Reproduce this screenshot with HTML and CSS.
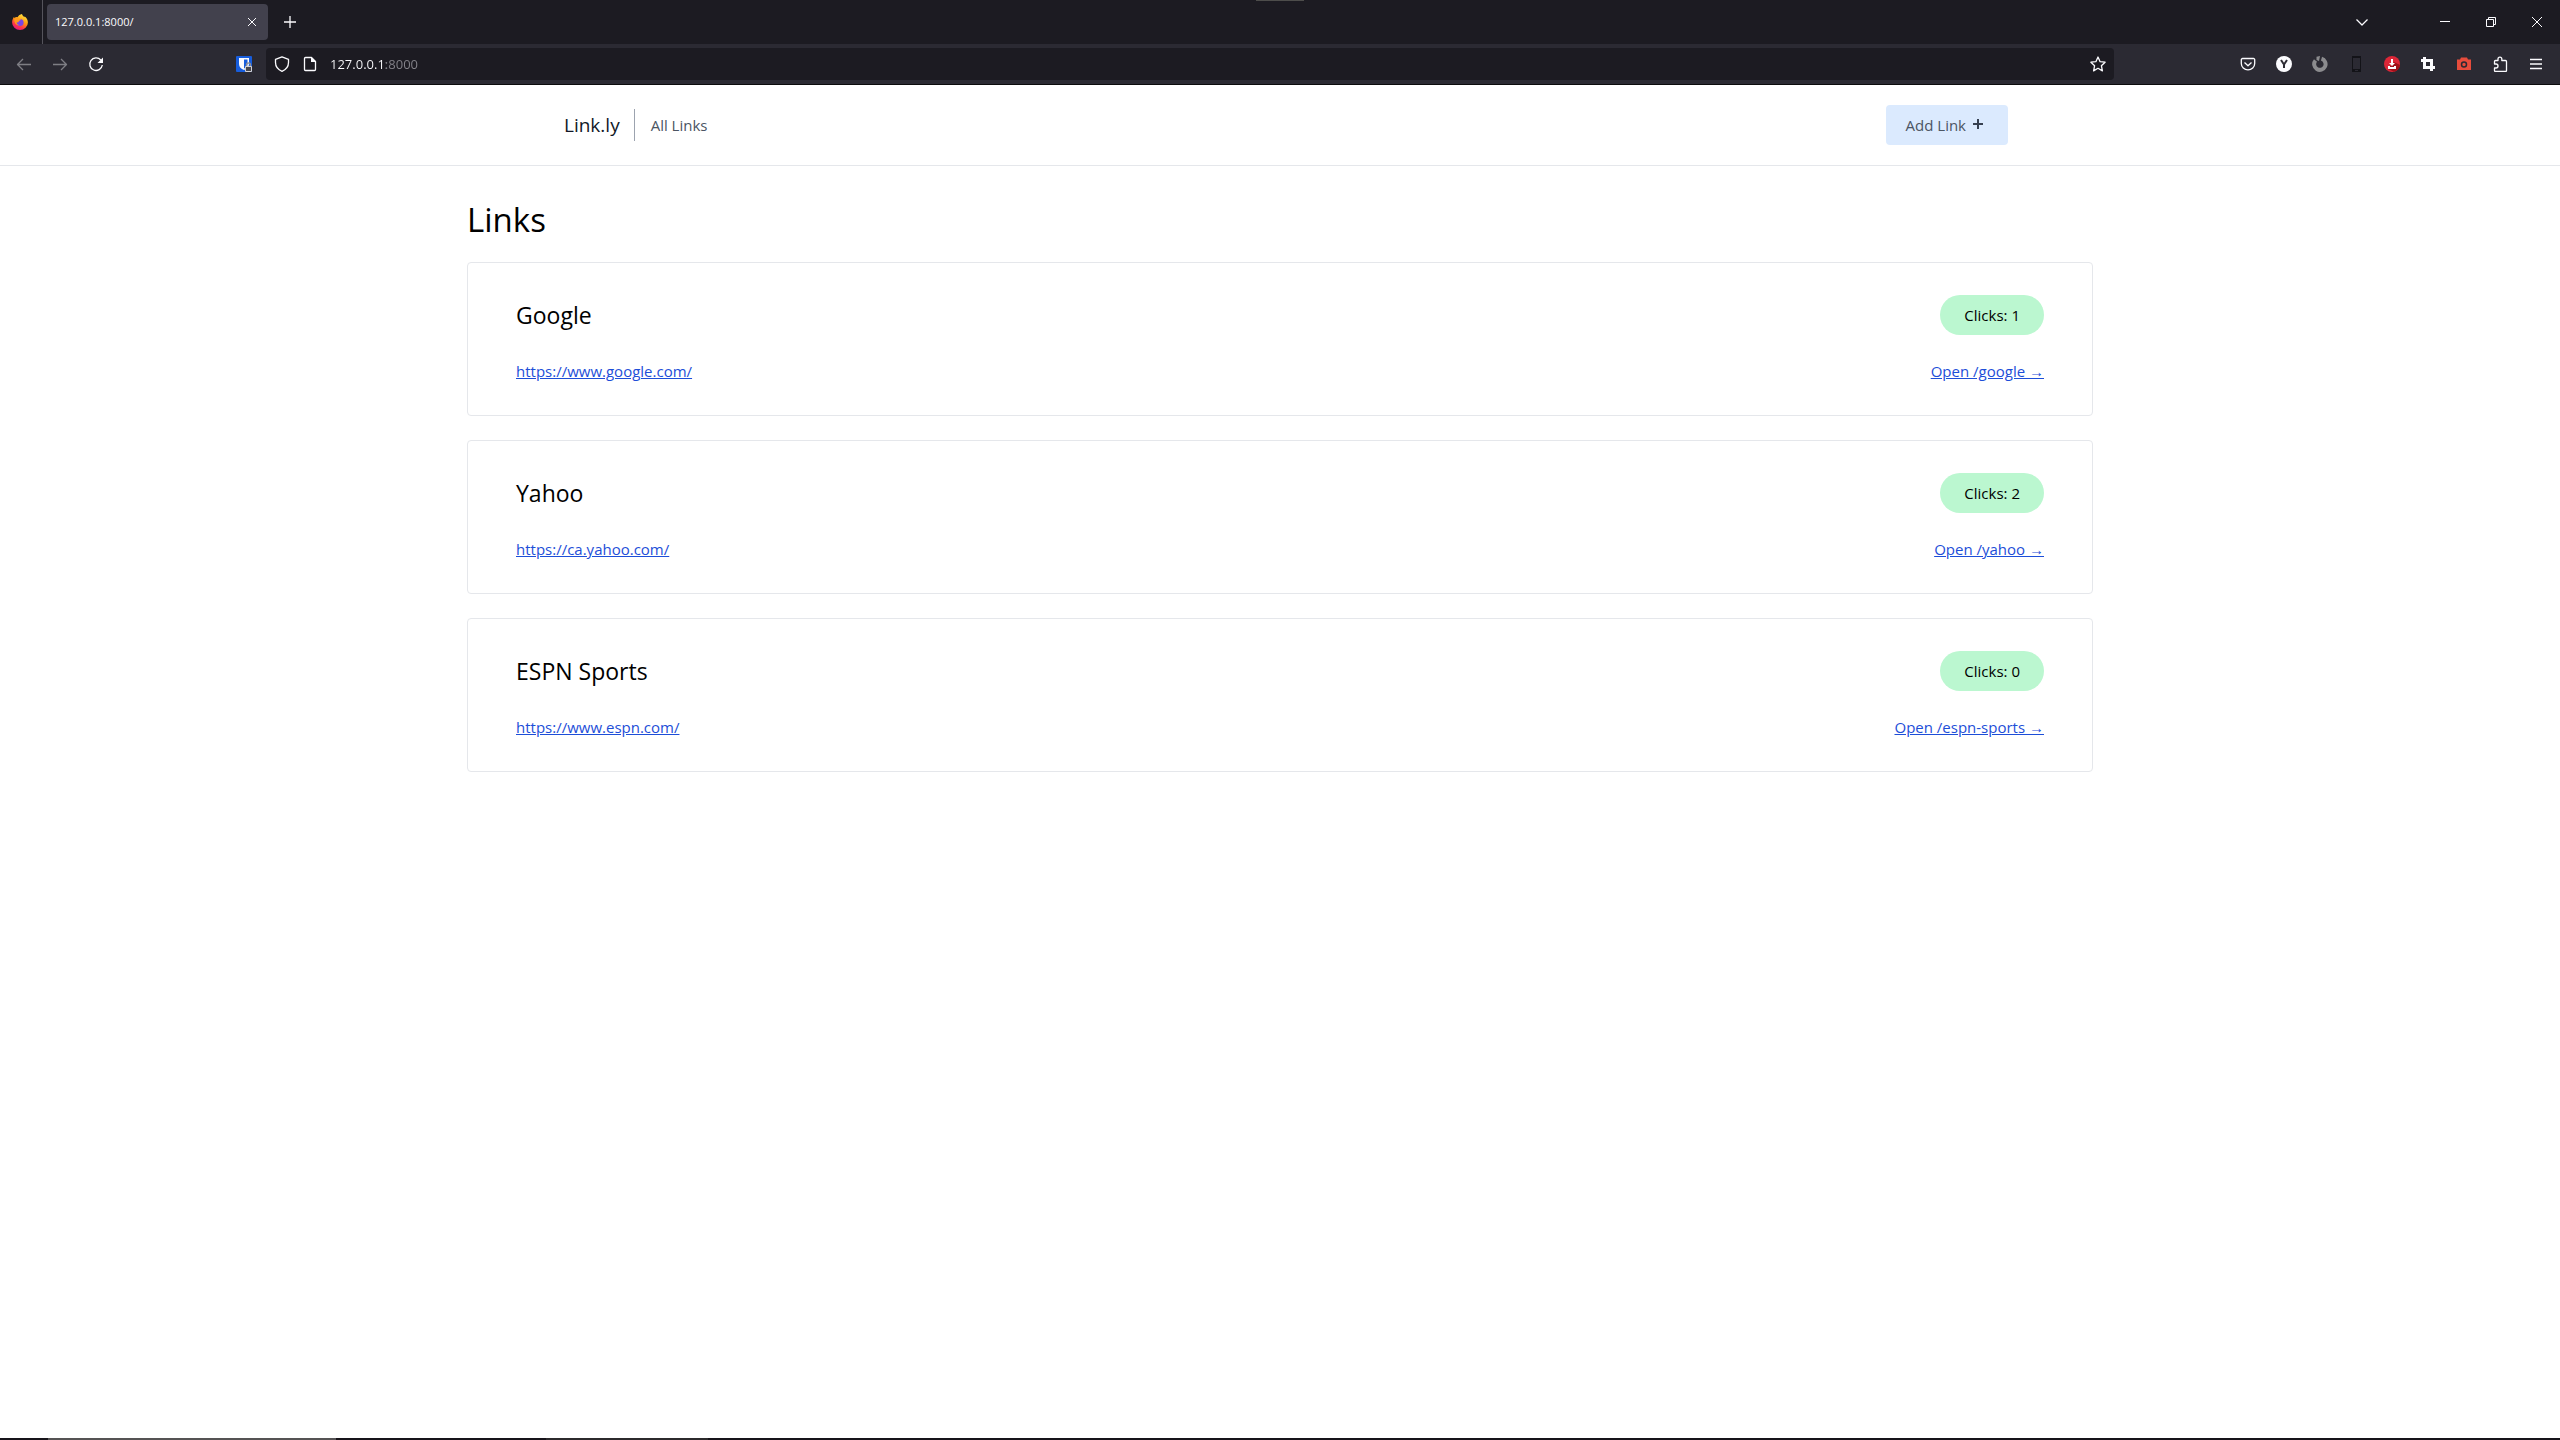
FILE: index.html
```
<!doctype html>
<html lang="en">
<head>
    <meta charset="utf-8">
    <title>127.0.0.1:8000/</title>
    <meta name="viewport" content="width=device-width, initial-scale=1">
    <link rel="stylesheet" href="styles.css">
</head>

<body>
<div class="browser">
    <div class="titlebar">
        <div class="pinned">
            <svg class="icon" viewBox="0 0 16 16">
                <defs>
                    <linearGradient id="flame" x1="0.8" y1="0" x2="0.3" y2="1">
                        <stop offset="0" stop-color="#fff04a"/>
                        <stop offset="0.45" stop-color="#ff980e"/>
                        <stop offset="0.75" stop-color="#ff3647"/>
                        <stop offset="1" stop-color="#e31587"/>
                    </linearGradient>
                </defs>
                <path d="M10 0c.3 1.600 1.300 2.200 2.500 3.300.1-.6-.1-1-.1-1 2.300 1.400 3.500 4 3.500 6.300a7.900 7.400 0 0 1-15.800 0C.1 6.300 1 4 2.200 2.800l.2 1.400C3.500 3.100 4.500 3 5.500 3.200 6.700 1.200 8 .4 10 0z" fill="url(#flame)"/>
                <circle cx="8" cy="8.500" r="3.600" fill="#7a45e5"/>
                <path d="M2.400 4.200c2-.8 3.500-.6 4.600.7l2 .3c-.3 1.300-2 1.400-2.300 2.300-.3 1.500-1.800 1-2 .3-.4 2 1.300 3.400 3 3.300-3 1-6-2-5.300-6.900z" fill="#ff9a1c"/>
            </svg>
        </div>
        <button class="tab" type="button">
            <span>127.0.0.1:8000/</span>
            <svg class="tab-close" viewBox="0 0 16 16"><path d="M4 4l8 8M12 4l-8 8"/></svg>
        </button>
        <button class="tool new-tab" type="button" aria-label="New tab">
            <svg class="icon" viewBox="0 0 16 16"><path d="M8 2v12M2 8h12"/></svg>
        </button>
        <div class="window-controls">
            <button class="tool tab-list" type="button" aria-label="List all tabs">
                <svg class="icon" viewBox="0 0 16 16"><path d="M2.500 5.500L8 11l5.500-5.500"/></svg>
            </button>
            <button class="window-button" type="button" aria-label="Minimize">
                <svg viewBox="0 0 10 10"><path d="M0 4.500h10"/></svg>
            </button>
            <button class="window-button" type="button" aria-label="Restore">
                <svg viewBox="0 0 10 10"><path d="M.5 2.500h7v7h-7zM2.500 2.500v-2h7v7h-2"/></svg>
            </button>
            <button class="window-button" type="button" aria-label="Close">
                <svg viewBox="0 0 10 10"><path d="M0 0l10 10M10 0L0 10"/></svg>
            </button>
        </div>
    </div>

    <div class="toolbar">
        <button class="tool dim" type="button" aria-label="Back" disabled>
            <svg class="icon" viewBox="0 0 16 16"><path d="M15 8.500H1.500M7 3L1.500 8.500 7 14"/></svg>
        </button>
        <button class="tool dim" type="button" aria-label="Forward" disabled>
            <svg class="icon" viewBox="0 0 16 16"><path d="M1 8.500h13.500M9 3l5.500 5.500L9 14"/></svg>
        </button>
        <button class="tool" type="button" aria-label="Reload">
            <svg class="icon" viewBox="0 0 16 16"><path d="M12.800 4A6.300 6.300 0 1 0 14.300 9"/><path class="solid" d="M15 1.500V7H9.500z"/></svg>
        </button>
        <div class="spacer"></div>
        <button class="tool" type="button" aria-label="Password manager">
            <svg class="icon" viewBox="0 0 16 16">
                <rect class="blue" width="16" height="16" rx="1"/>
                <path class="solid" d="M3 2h10v6c0 3-2 5-5 6-3-1-5-3-5-6z"/>
                <path class="blue" d="M8 3.500h3.500V8c0 2-1.500 3.500-3.500 4.500z"/>
                <path class="shackle" d="M10.500 11V9a2 2 0 0 1 4 0v2"/>
                <rect class="lock" x="9.500" y="10.500" width="6" height="5"/>
            </svg>
        </button>
        <div class="urlbar">
            <svg class="icon" viewBox="0 0 16 16"><path d="M8 .8l6.500 2.500v3.200c0 4-2.300 7-6.500 8.800C3.800 13.500 1.500 10.500 1.500 6.500V3.300z"/></svg>
            <svg class="icon" viewBox="0 0 16 16"><path d="M3.500 1.500h6l4 4v8a1 1 0 0 1-1 1h-9a1 1 0 0 1-1-1v-11a1 1 0 0 1 1-1z"/><path class="solid" d="M9 1v5h5z"/></svg>
            <input class="address" type="text" value="127.0.0.1:8000" aria-label="Address">
            <svg class="icon" viewBox="0 0 16 16"><path d="M8 1l2.100 4.700 5 .5-3.700 3.500 1 5.200L8 12.300l-4.400 2.600 1-5.200L.9 6.200l5-.5z"/></svg>
        </div>
        <div class="spacer"></div>
        <button class="tool" type="button" aria-label="Save to Pocket">
            <svg class="icon" viewBox="0 0 16 16"><path d="M2.500 2.500h11a1.200 1.200 0 0 1 1.200 1.200V7.500a6.700 6.300 0 0 1-13.400 0V3.700a1.200 1.200 0 0 1 1.200-1.200zM4.500 6.500L8 9.700l3.500-3.200"/></svg>
        </button>
        <button class="tool" type="button" aria-label="Y extension">
            <svg class="icon" viewBox="0 0 16 16"><circle class="solid" cx="8" cy="8" r="8"/><path class="dark-line" d="M5 4l3 4.500L11 4M8 8.500V12"/></svg>
        </button>
        <button class="tool" type="button" aria-label="Ring extension">
            <svg class="icon" viewBox="0 0 16 16"><path class="ring" d="M9.500 2.700A5.700 5.700 0 1 1 3.500 4.500"/><path class="grey" d="M4.500.8L8 0 7 5 4.500 4z"/></svg>
        </button>
        <button class="tool" type="button" aria-label="Device preview">
            <svg class="icon" viewBox="0 0 16 16"><path class="phone" fill-rule="evenodd" d="M4 0h9v16H4zM5 2v11h7V2zM7 14v1h3v-1z"/></svg>
        </button>
        <button class="tool" type="button" aria-label="Downloader">
            <svg class="icon" viewBox="0 0 16 16"><circle class="red" cx="8" cy="8" r="8"/><path class="deep-red" d="M10 6l6 3A8 8 0 0 1 10 15.700L4 13z"/><path class="solid" d="M7 3h2v4h2L8 10 5 7h2zM4 10h2v1h4v-1h2v3H4z"/></svg>
        </button>
        <button class="tool" type="button" aria-label="Crop">
            <svg class="icon" viewBox="0 0 16 16"><path class="crop" d="M1 4.500h10.500V15M4.500 1v10.500H15"/></svg>
        </button>
        <button class="tool" type="button" aria-label="Screenshot">
            <svg class="icon" viewBox="0 0 16 16"><path class="camera" d="M1 3.500h3l1-2h6l1 2h3V14H1z"/><circle class="lens" cx="8" cy="8.500" r="2.500"/></svg>
        </button>
        <button class="tool" type="button" aria-label="Extensions">
            <svg class="icon" viewBox="0 0 16 16"><path d="M2.500 8V5.500a1 1 0 0 1 1-1H6V3a1.900 1.900 0 0 1 3.800 0v1.500h3.700a1 1 0 0 1 1 1v9a1 1 0 0 1-1 1h-10a1 1 0 0 1-1-1V12H4a2 2 0 0 0 0-4z"/></svg>
        </button>
        <button class="tool" type="button" aria-label="Menu">
            <svg class="icon" viewBox="0 0 16 16"><path d="M2 3.500h12M2 8h12M2 12.500h12"/></svg>
        </button>
    </div>
</div>

<nav class="nav">
    <div class="nav-inner">
        <a class="brand" href="#">Link.ly</a>
        <a class="nav-link" href="#">All Links</a>
        <button class="add-link" type="button">
            Add Link
            <svg class="plus" viewBox="0 0 16 16"><path d="M6 2v10M1 7h10"/></svg>
        </button>
    </div>
</nav>

<main class="page">
    <h1>Links</h1>

    <section class="card">
        <div class="card-row">
            <h2>Google</h2>
            <span class="clicks">Clicks: 1</span>
        </div>
        <div class="card-row">
            <a href="https://www.google.com/">https://www.google.com/</a>
            <a href="/google">Open /google →</a>
        </div>
    </section>

    <section class="card">
        <div class="card-row">
            <h2>Yahoo</h2>
            <span class="clicks">Clicks: 2</span>
        </div>
        <div class="card-row">
            <a href="https://ca.yahoo.com/">https://ca.yahoo.com/</a>
            <a href="/yahoo">Open /yahoo →</a>
        </div>
    </section>

    <section class="card">
        <div class="card-row">
            <h2>ESPN Sports</h2>
            <span class="clicks">Clicks: 0</span>
        </div>
        <div class="card-row">
            <a href="https://www.espn.com/">https://www.espn.com/</a>
            <a href="/espn-sports">Open /espn-sports →</a>
        </div>
    </section>
</main>

<footer class="taskbar">
    <div class="task-active"></div>
    <div class="task-idle"></div>
</footer>
</body>
</html>
```

FILE: styles.css
```
* {
    box-sizing: border-box;
}

body {
    display: flex;
    flex-direction: column;
    min-height: 100vh;
    margin: 0;
    background: #fff;
    color: #000;
    font-family: "Open Sans", "Liberation Sans", sans-serif;
    font-size: 15px;
    line-height: 24px;
}

button, input {
    border: 0;
    padding: 0;
    background: none;
    font: inherit;
}

/* browser window */
.browser {
    position: relative;
    background: #2b2a33;
    border-bottom: 1px solid #0c0c0d;
    color: #fbfbfe;
}

/* grab handle over the top edge */
.browser::before {
    content: "";
    position: absolute;
    top: 0;
    left: 50%;
    width: 48px;
    height: 1px;
    margin-left: -24px;
    background: #4d4d4b;
}

.browser svg {
    display: block;
    flex: none;
    fill: none;
    stroke: #fbfbfe;
    stroke-width: 1.3;
    stroke-linejoin: round;
}

.icon {
    width: 16px;
    height: 16px;
}

.titlebar {
    display: flex;
    align-items: center;
    height: 44px;
    background: #1c1b22;
}

.pinned {
    display: flex;
    align-items: center;
    width: 43px;
    height: 44px;
    padding-left: 12px;
    border-right: 1px solid #55545c;
}

.browser .pinned svg {
    stroke: none;
}

.tab {
    display: flex;
    align-items: center;
    justify-content: space-between;
    width: 221px;
    height: 36px;
    margin-left: 4px;
    padding: 0 8px;
    border-radius: 4px;
    background: #42414d;
    color: #fbfbfe;
    font-size: 11px;
}

.browser .tab-close {
    width: 16px;
    height: 16px;
    stroke-width: 1;
}

.tool {
    display: flex;
    align-items: center;
    justify-content: center;
    flex: none;
    width: 36px;
    height: 36px;
}

.new-tab {
    margin-left: 4px;
}

.window-controls {
    display: flex;
    align-items: center;
    margin-left: auto;
}

.tab-list {
    margin-right: 42px;
}

.window-button {
    display: flex;
    align-items: center;
    justify-content: center;
    width: 46px;
    height: 44px;
}

.browser .window-button svg {
    width: 10px;
    height: 10px;
    overflow: visible;
    stroke-width: 1;
    stroke-linejoin: miter;
}

.toolbar {
    display: flex;
    align-items: center;
    height: 40px;
    padding: 0 6px;
}

.dim {
    opacity: 0.4;
}

.spacer {
    flex: 0 1 112px;
}

.urlbar {
    display: flex;
    align-items: center;
    flex: 1;
    gap: 12px;
    height: 32px;
    margin: 0 4px;
    padding: 0 8px;
    border-radius: 4px;
    background: #1c1b22;
}

/* host in white, port in grey */
.address {
    flex: 1;
    min-width: 0;
    background: linear-gradient(to right, #fbfbfe 56px, #85848b 56px);
    background-clip: text;
    -webkit-background-clip: text;
    color: transparent;
    font-size: 13px;
}

.browser .solid {
    fill: #fbfbfe;
    stroke: none;
}

.browser .blue {
    fill: #175ddc;
    stroke: none;
}

.browser .lock {
    fill: #47464d;
    stroke: #d0d0d4;
    stroke-width: 1;
}

.browser .shackle {
    stroke: #8f8f94;
}

.browser .dark-line {
    stroke: #2b2a33;
    stroke-width: 2;
}

.browser .ring {
    stroke: #8b8b8e;
    stroke-width: 4;
}

.browser .grey {
    fill: #8b8b8e;
    stroke: none;
}

.browser .phone {
    fill: #131318;
    stroke: none;
}

.browser .red {
    fill: #dc2637;
    stroke: none;
}

.browser .deep-red {
    fill: #a01018;
    stroke: none;
}

.browser .crop {
    stroke-width: 3;
    stroke-linejoin: miter;
}

.browser .camera {
    fill: #e74c3c;
    stroke: none;
}

.browser .lens {
    stroke: #2b2a33;
    stroke-width: 1.5;
}

/* site navigation */
.nav {
    border-bottom: 1px solid #e5e7eb;
}

.nav-inner {
    display: flex;
    align-items: center;
    max-width: 1536px;
    margin: 0 auto;
    padding: 20px 40px 20px 52px;
}

.brand {
    padding-right: 14px;
    color: #111827;
    font-size: 19px;
    line-height: 32px;
    text-decoration: none;
    border-right: 1px solid #9ca3af;
}

.nav-link {
    margin-left: 16px;
    color: #4b5563;
    text-decoration: none;
}

.add-link {
    display: flex;
    align-items: center;
    gap: 6px;
    margin-left: auto;
    padding: 8px 20px;
    border-radius: 4px;
    background: #dbeafe;
    color: #4b5563;
    cursor: pointer;
}

.plus {
    width: 16px;
    height: 16px;
    fill: none;
    stroke: #374151;
    stroke-width: 2;
}

/* link list */
.page {
    flex: 1;
    width: 100%;
    max-width: 1626px;
    margin: 0 auto;
    padding-top: 32px;
}

h1 {
    margin: 0 0 20px;
    font-size: 33px;
    font-weight: 400;
    line-height: 44px;
}

.card {
    display: flex;
    flex-direction: column;
    gap: 24px;
    margin-bottom: 24px;
    padding: 32px 48px;
    border: 1px solid #e5e7eb;
    border-radius: 4px;
}

.card-row {
    display: flex;
    align-items: center;
    justify-content: space-between;
}

.card-row a {
    color: #1d4ed8;
}

h2 {
    margin: 0;
    font-size: 23px;
    font-weight: 400;
    line-height: 32px;
}

.clicks {
    padding: 8px 24px;
    border-radius: 20px;
    background: #bbf7d0;
}

/* sliver of the taskbar along the bottom */
.taskbar {
    display: flex;
    height: 2px;
    background: #17141a;
}

.task-active {
    width: 288px;
    margin-left: 48px;
    background: #555354;
}

.task-idle {
    width: 162px;
    margin-left: 210px;
    background: #2c2a2c;
}
```
